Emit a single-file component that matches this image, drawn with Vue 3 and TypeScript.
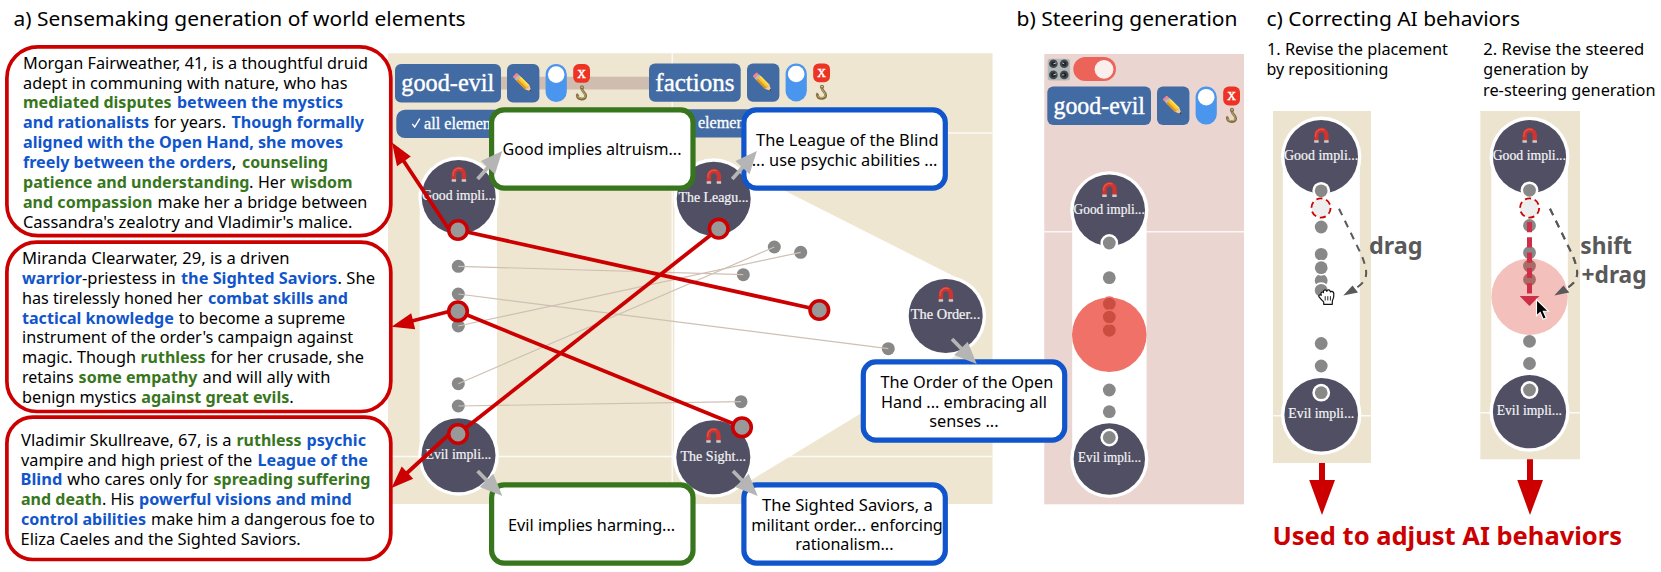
<script setup lang="ts">
type Seg = [text: string, start: number, end: number, tone?: 'green' | 'blue']
interface Card { y: number; h: number; r: number; base: number; lines: Seg[][] }
interface Label { t: string; x: number; e: number; y: number; c: string }
interface Toolbar { x: number; y: number; w: number; name: string; tx: number; te: number; px: number }

const LINE = 19.87

const cards: Card[] = [
  {
    y: 46.9, h: 188.8, r: 31, base: 68.7,
    lines: [
      [['Morgan Fairweather, 41, is a thoughtful druid', 23, 368]],
      [['adept in communing with nature, who has', 23, 347.5]],
      [['mediated disputes', 23, 171.5, 'green'], ['between the mystics', 177, 343, 'blue']],
      [['and rationalists', 23, 149, 'blue'], ['for years.', 154, 226], ['Though formally', 231.5, 364, 'blue']],
      [['aligned with the Open Hand, she moves', 23, 343, 'blue']],
      [['freely between the orders', 23, 231.5, 'blue'], [',', 231.5, 236.5], ['counseling', 242, 328, 'green']],
      [['patience and understanding', 23, 249.5, 'green'], ['.', 249, 253.5], ['Her', 258, 285.5], ['wisdom', 290.5, 352.5, 'green']],
      [['and compassion', 23, 152.5, 'green'], ['make her a bridge between', 157.5, 367.3]],
      [["Cassandra's zealotry and Vladimir's malice.", 23, 352.5]],
    ],
  },
  {
    y: 242.1, h: 169.4, r: 30, base: 264,
    lines: [
      [['Miranda Clearwater, 29, is a driven', 22, 289.5]],
      [['warrior', 22, 82, 'blue'], ['-priestess in', 82, 175.8], ['the Sighted Saviors', 181, 337.3, 'blue'], ['. She', 337.5, 375]],
      [['has tirelessly honed her', 22, 202.8], ['combat skills and', 208, 348, 'blue']],
      [['tactical knowledge', 22, 173.8, 'blue'], ['to become a supreme', 178.8, 345.3]],
      [["instrument of the order's campaign against", 22, 353]],
      [['magic. Though', 22, 136], ['ruthless', 140.5, 205.5, 'green'], ['for her crusade, she', 210.5, 364]],
      [['retains', 22, 73.6], ['some empathy', 78.6, 197.5, 'green'], ['and will ally with', 202.6, 330.5]],
      [['benign mystics', 22, 136.5], ['against great evils', 141.3, 289.3, 'green'], ['.', 289.3, 293.8]],
    ],
  },
  {
    y: 417.2, h: 142.3, r: 26, base: 445.7,
    lines: [
      [['Vladimir Skullreave, 67, is a', 21, 231.5], ['ruthless', 236.5, 301.5, 'green'], ['psychic', 306.5, 366, 'blue']],
      [['vampire and high priest of the', 21, 252.3], ['League of the', 257.5, 368, 'blue']],
      [['Blind', 20.5, 62.3, 'blue'], ['who cares only for', 67.3, 208.3], ['spreading suffering', 213.5, 370.3, 'green']],
      [['and death', 21, 102, 'green'], ['. His', 102, 134.3], ['powerful visions and mind', 139, 351.7, 'blue']],
      [['control abilities', 21, 146, 'blue'], ['make him a dangerous foe to', 151, 374.8]],
      [['Eliza Caeles and the Sighted Saviors.', 20.5, 300.8]],
    ],
  },
]

const titles: Label[] = [
  { t: 'a) Sensemaking generation of world elements', x: 13.5, e: 465.5, y: 25.5, c: 'title' },
  { t: 'b) Steering generation', x: 1016.5, e: 1237.5, y: 25.5, c: 'title' },
  { t: 'c) Correcting AI behaviors', x: 1266.5, e: 1520, y: 25.5, c: 'title' },
  { t: '1. Revise the placement', x: 1267, e: 1448, y: 55, c: 'body' },
  { t: 'by repositioning', x: 1266.5, e: 1388.3, y: 75.4, c: 'body' },
  { t: '2. Revise the steered', x: 1483.3, e: 1644.3, y: 55, c: 'body' },
  { t: 'generation by', x: 1483.3, e: 1588.3, y: 75.4, c: 'body' },
  { t: 're-steering generation', x: 1483, e: 1655.5, y: 95.8, c: 'body' },
  { t: 'drag', x: 1369, e: 1422.6, y: 254, c: 'action' },
  { t: 'shift', x: 1580.3, e: 1632, y: 254, c: 'action' },
  { t: '+drag', x: 1581.5, e: 1646.6, y: 283, c: 'action' },
  { t: 'Used to adjust AI behaviors', x: 1272.5, e: 1622, y: 545, c: 'verdict' },
]

const boxes = [
  { x: 491.6, y: 109.9, tone: 'green' },
  { x: 743.9, y: 109.9, tone: 'blue' },
  { x: 863.3, y: 361.9, tone: 'blue' },
  { x: 491.6, y: 484.9, tone: 'green' },
  { x: 743.9, y: 484.9, tone: 'blue' },
]
const boxText: Label[] = [
  { t: 'Good implies altruism...', x: 502.5, e: 681.5, y: 155.3, c: 'body' },
  { t: 'The League of the Blind', x: 756, e: 938.5, y: 145.6, c: 'body' },
  { t: '... use psychic abilities ...', x: 751.7, e: 937.5, y: 165.5, c: 'body' },
  { t: 'The Order of the Open', x: 880.5, e: 1053.3, y: 387.7, c: 'body' },
  { t: 'Hand ... embracing all', x: 881, e: 1047, y: 407.5, c: 'body' },
  { t: 'senses ...', x: 929.3, e: 998.5, y: 427.4, c: 'body' },
  { t: 'Evil implies harming...', x: 508, e: 675.2, y: 531, c: 'body' },
  { t: 'The Sighted Saviors, a', x: 762, e: 932.8, y: 510.7, c: 'body' },
  { t: 'militant order... enforcing', x: 751.3, e: 942.8, y: 530.5, c: 'body' },
  { t: 'rationalism...', x: 795.3, e: 893.5, y: 550.3, c: 'body' },
]

const toolbars: Toolbar[] = [
  { x: 395, y: 64, w: 106, name: 'good-evil', tx: 401.3, te: 494.3, px: 507 },
  { x: 649, y: 63.4, w: 91.7, name: 'factions', tx: 655.3, te: 734.6, px: 747 },
  { x: 1047.3, y: 86.6, w: 103.7, name: 'good-evil', tx: 1053.5, te: 1145, px: 1157 },
]

interface Pole { x: number; y: number; r: number; t: string; lx: number; le: number; ly: number; my?: number }
const poles: Pole[] = [
  { x: 458.7, y: 197, r: 37, t: 'Good impli...', lx: 422, le: 495.3, ly: 200, my: 175 },
  { x: 458.5, y: 455.3, r: 37, t: 'Evil impli...', lx: 425.5, le: 491.3, ly: 458.7 },
  { x: 713.7, y: 198.7, r: 37, t: 'The Leagu...', lx: 678.5, le: 748.6, ly: 202.3, my: 177 },
  { x: 713.3, y: 457.3, r: 37, t: 'The Sight...', lx: 680.5, le: 746, ly: 460.7, my: 436 },
  { x: 945.7, y: 316, r: 37, t: 'The Order...', lx: 910.8, le: 980.3, ly: 319.3, my: 295 },
  { x: 1109.3, y: 210.3, r: 35.7, t: 'Good impli...', lx: 1073.6, le: 1144.8, ly: 213.7, my: 190.3 },
  { x: 1109.3, y: 459, r: 35.7, t: 'Evil impli...', lx: 1078, le: 1141, ly: 462.3 },
  { x: 1321.2, y: 156.8, r: 36.8, t: 'Good impli...', lx: 1284, le: 1358.3, ly: 160.3, my: 136 },
  { x: 1321.2, y: 414.7, r: 36.8, t: 'Evil impli...', lx: 1288.3, le: 1354.3, ly: 418 },
  { x: 1529.5, y: 156.7, r: 36.6, t: 'Good impli...', lx: 1492.7, le: 1566, ly: 160.2, my: 136 },
  { x: 1529.5, y: 411.7, r: 36.6, t: 'Evil impli...', lx: 1496.7, le: 1562, ly: 415 },
]

const links = [
  [266.3, 743.3, 274.7], [294, 888.3, 348.7], [326, 800.7, 252.3], [383.7, 774.3, 247], [406, 741, 401.7],
]
const tracked = [
  [458, 230, 819.3, 310], [458, 311.3, 742, 427.3], [458, 434, 718.7, 228.7],
]
const plainDots = [
  [1109.3, 277.7], [1109.3, 390], [1109.3, 411.7],
  [1321.2, 227], [1321.2, 254.3], [1321.2, 280.5], [1321.2, 267.7], [1321.2, 290.3], [1321.2, 343.5], [1321.2, 366],
  [1529.5, 225.5], [1529.5, 252.6], [1529.5, 341.3], [1529.5, 363.5],
]
const ringDots = [
  [1109.3, 243], [1109.3, 437.5], [1321.2, 190.8], [1321.2, 392.7], [1529.5, 190.3], [1529.5, 390],
]
const pointers = [
  { x: 502.3, y: 151, up: true }, { x: 756.9, y: 151, up: true },
  { x: 502.3, y: 496, up: false }, { x: 757.7, y: 496, up: false }, { x: 976.7, y: 364, up: false },
]
</script>

<template>
  <main class="figure">
    <svg class="canvas" viewBox="0 0 1661 572" width="1661" height="572" role="img" aria-label="Sensemaking, steering and correcting generation">
      <defs>
        <g id="pencil">
          <g transform="rotate(45)">
            <rect x="-11.4" y="-3" width="3.4" height="6" rx="1.3" fill="#ee8791" />
            <rect x="-8.3" y="-3" width="2.4" height="6" fill="#b9c0c5" />
            <rect x="-6" y="-3" width="12.5" height="6" fill="#fbc62c" />
            <rect x="-6" y="0.9" width="12.5" height="2.1" fill="#e19522" />
            <rect x="-6" y="-3" width="12.5" height="1.7" fill="#ffdc59" />
            <path d="M6.5-3L12.4 0L6.5 3Z" fill="#efc99a" />
            <path d="M10.3-1.1L12.7 0L10.3 1.1Z" fill="#333" />
          </g>
        </g>
        <g id="hook" fill="none" stroke-linecap="round">
          <circle cx="0.5" cy="-5.6" r="1.5" stroke="#8b774a" stroke-width="1.3" />
          <path d="M.5-3.8C.5-1.7 4.2-.3 4.2 3C4.2 7-3.5 7.5-4.3 2.3" stroke="#7f6a3c" stroke-width="2.7" />
          <path d="M.4-3.4C.8-1.7 3.7-.3 3.7 2.9C3.7 5.6-2.7 6.4-4 2.6" stroke="#b7a36b" stroke-width="1.1" />
          <path d="M-5.6 3.5L-4.6-.2L-2.2 2.8Z" fill="#8b774a" />
        </g>
        <g id="magnet">
          <path d="M-5 6.4V0A5 5 0 0 1 5 0V6.4" transform="translate(0 -1)" fill="none" stroke="#cf3430" stroke-width="4.4" />
          <path d="M-5.8 1V-1A5.8 5.8 0 0 1 3-6" fill="none" stroke="#e4574d" stroke-width="1.1" />
          <path d="M-7.2 4.2H-2.8V6.8H-7.2ZM2.8 4.2H7.2V6.8H2.8Z" fill="#c7cbcc" />
        </g>
        <g id="drag-path">
          <path d="M1339 208.7L1361.5 255C1366.5 268 1367.5 274 1364.5 280C1362.5 284 1358 287 1354 289.5" fill="none" stroke="#595959" stroke-width="2" stroke-dasharray="7.2 6.2" />
          <path d="M1343.3 295.5L1352.5 285.4L1358 292.6Z" fill="#595959" />
        </g>
      </defs>

      <!-- panel grounds -->
      <rect x="388" y="53.3" width="604.5" height="450.7" fill="#eee6d1" />
      <path d="M672.2 53.3V504M672.2 133H992.5M388 456.5H992.5" class="grid" />
      <rect x="1044.3" y="54" width="199.7" height="450.3" fill="#ebd5d0" />
      <path d="M1044.3 231.8H1244" class="grid" />
      <rect x="1273" y="111" width="98" height="352" fill="#ece4cf" />
      <path d="M1273 415.7H1371" class="grid" />
      <rect x="1480.3" y="111" width="99.7" height="348.3" fill="#ece4cf" />
      <path d="M1480.3 412.7H1580" class="grid" />

      <!-- tracks -->
      <g fill="#fff">
        <rect x="419.7" y="197" width="77.3" height="258.3" />
        <path d="M713.7 198.7L945.7 316L713.3 457.3Z" stroke="#fff" stroke-width="78.4" stroke-linejoin="round" />
        <rect x="1072.2" y="210" width="74.4" height="249" />
        <rect x="1282.8" y="157" width="77" height="258" />
        <rect x="1491.3" y="157" width="76.5" height="255" />
        <circle v-for="(p, i) in poles" :key="i" :cx="p.x" :cy="p.y" :r="p.r + 3.4" />
      </g>

      <!-- toolbars -->
      <rect x="500" y="76.7" width="150" height="12.8" fill="#cfbeb0" />
      <path d="M405 109.7H520V138H405A8.7 8.7 0 0 1 396.3 129.3V118.4A8.7 8.7 0 0 1 405 109.7ZM660 109.3H780V137.4H660Z" fill="#426aa3" />
      <path d="M412.3 123.8L414.7 127L419.8 118.6" fill="none" stroke="#fff" stroke-width="1.4" />
      <text x="424" y="128.5" class="serif chip">all elements</text>
      <text x="677.7" y="127.9" class="serif chip">all elements</text>
      <g v-for="(b, i) in toolbars" :key="i">
        <rect :x="b.x" :y="b.y" :width="b.w" height="38.4" rx="6" fill="#426aa3" />
        <text :x="b.tx" :y="b.y + 27.2" :textLength="b.te - b.tx" lengthAdjust="spacingAndGlyphs" class="serif name">{{ b.name }}</text>
        <rect :x="b.px" :y="b.y" width="32.4" height="38.4" rx="6" fill="#426aa3" />
        <use href="#pencil" :transform="`translate(${b.px + 15.7} ${b.y + 18.8})`" />
        <rect :x="b.px + 38.6" :y="b.y" width="21.2" height="38" rx="10.6" fill="#4a95ee" />
        <circle :cx="b.px + 49.2" :cy="b.y + 10.6" r="8.3" fill="#fff" />
        <rect :x="b.px + 66.2" :y="b.y" width="16.8" height="18.8" rx="5.6" fill="#ed3324" />
        <text :x="b.px + 74.6" :y="b.y + 13.6" class="serif close" text-anchor="middle">X</text>
        <use href="#hook" :transform="`translate(${b.px + 74.5} ${b.y + 29})`" />
      </g>

      <g>
        <rect x="1047.7" y="58.8" width="22.2" height="21.6" rx="2.5" fill="#b3b8ba" />
        <g v-for="(k, i) in [[1053.4, 63.8], [1064.2, 63.8], [1053.4, 74.9], [1064.2, 74.9]]" :key="i">
          <circle :cx="k[0]" :cy="k[1]" r="4.3" fill="#44494c" />
          <circle :cx="k[0]" :cy="k[1]" r="2.3" fill="#202426" />
          <path :d="`M${k[0]} ${k[1]}l${i % 2 ? -2 : 3} ${i === 3 ? 0 : -1}`" stroke="#c9cdce" stroke-width="1" />
        </g>
        <rect x="1073.3" y="57" width="42.7" height="24" rx="12" fill="#ec6459" />
        <circle cx="1104" cy="69.3" r="9.4" fill="#fbefee" />
      </g>

      <!-- poles -->
      <g v-for="(p, i) in poles" :key="i">
        <circle :cx="p.x" :cy="p.y" :r="p.r" fill="#504f63" />
        <use v-if="p.my" href="#magnet" :transform="`translate(${p.x + 0.2} ${p.my})`" />
        <text :x="p.lx" :y="p.ly" :textLength="p.le - p.lx" lengthAdjust="spacingAndGlyphs" class="serif pole">{{ p.t }}</text>
      </g>

      <!-- linked elements -->
      <g v-for="(l, i) in links" :key="i">
        <circle cx="458.3" :cy="l[0]" r="6.5" fill="#888" />
        <circle :cx="l[1]" :cy="l[2]" r="6.5" fill="#888" />
        <path :d="`M458.3 ${l[0]}L${l[1]} ${l[2]}`" stroke="#cfc0b3" stroke-width="1.2" />
      </g>
      <g v-for="(d, i) in plainDots" :key="i">
        <circle :cx="d[0]" :cy="d[1]" r="8" fill="#fff" />
        <circle :cx="d[0]" :cy="d[1]" r="6.4" fill="#888" />
      </g>
      <g v-for="(d, i) in ringDots" :key="i">
        <circle :cx="d[0]" :cy="d[1]" r="8.9" fill="#fff" />
        <circle :cx="d[0]" :cy="d[1]" r="6.4" fill="#888" />
      </g>

      <!-- boxes -->
      <rect v-for="(b, i) in boxes" :key="i" :x="b.x" :y="b.y" width="201.4" height="78.2" rx="12.5" fill="#fff" stroke-width="5.2" :class="['edge', b.tone]" />
      <text v-for="(l, i) in boxText" :key="i" :x="l.x" :y="l.y" :textLength="l.e - l.x" lengthAdjust="spacingAndGlyphs" :class="l.c">{{ l.t }}</text>
      <g v-for="(a, i) in pointers" :key="i" :transform="`translate(${a.x} ${a.y})`" fill="#b5b5b5">
        <template v-if="a.up">
          <path d="M-24.7 28L-13 15" stroke="#b5b5b5" stroke-width="3.8" />
          <path d="M0 0L-21.4 10L-7.4 23.3Z" />
        </template>
        <template v-else>
          <path d="M-24.7-25L-14-14" stroke="#b5b5b5" stroke-width="3.8" />
          <path d="M0 0L-22.5-9L-9-22.2Z" />
        </template>
      </g>

      <!-- story cards -->
      <g v-for="(c, i) in cards" :key="i">
        <rect x="6.9" :y="c.y" width="383.9" :height="c.h" :rx="c.r" fill="#fff" stroke="#c00" stroke-width="3.7" />
        <template v-for="(line, j) in c.lines" :key="j">
          <text v-for="(s, k) in line" :key="k" :x="s[1]" :y="c.base + j * LINE" :textLength="s[2] - s[1]" lengthAdjust="spacingAndGlyphs" :class="['body', s[3]]">{{ s[0] }}</text>
        </template>
      </g>

      <!-- tracked elements -->
      <g stroke="#c00" stroke-width="3.8" fill="none">
        <path v-for="(t, i) in tracked" :key="i" :d="`M${t[0]} ${t[1]}L${t[2]} ${t[3]}`" />
        <path d="M449 229.5L403 160M449 311.5L412 321M449 434.5L407 473" />
      </g>
      <path d="M392 142.4L410.8 156.6L397 166.3ZM391.5 326.7L411.2 313.2L415.2 329.2ZM391.5 488L401.7 466.4L413.2 478.8Z" fill="#c00" />
      <template v-for="(t, i) in tracked" :key="i">
        <circle :cx="t[0]" :cy="t[1]" r="9.3" class="mark" />
        <circle :cx="t[2]" :cy="t[3]" r="9.3" class="mark" />
      </template>

      <!-- steering target -->
      <circle cx="1109.3" cy="334.7" r="37.3" fill="#f07167" />
      <circle v-for="y in [304, 330.3, 317]" :key="y" cx="1109.3" :cy="y" r="7" fill="#cb4c41" stroke="#f07167" stroke-width="1.3" />

      <!-- repositioning -->
      <circle cx="1321" cy="208" r="9.6" class="ghost" />
      <circle cx="1529.6" cy="208" r="9.6" class="ghost" />
      <use href="#drag-path" />
      <use href="#drag-path" transform="translate(211 0)" />
      <circle cx="1529.6" cy="296.7" r="38.2" fill="#f4c0bc" />
      <circle v-for="y in [266, 279.5]" :key="y" cx="1529.5" :cy="y" r="6.4" fill="#a96b66" />
      <path d="M1523.2 254A6.4 6.4 0 0 0 1535.8 254V258H1523.2Z" fill="none" />
      <path d="M1529.5 222V294" stroke="#cc2f47" stroke-width="5" stroke-dasharray="10.2 5.1" />
      <path d="M1519.6 296H1539.4L1529.5 306Z" fill="#cc2f47" />
      <use href="#drag-path" transform="translate(211 0)" />

      <g transform="translate(1318 288.5)" stroke-linejoin="round">
        <path d="M3.2 6.5C2.3 4.2 4 2.6 5.4 4C5 1.3 8 .5 8.8 2.8C9.5.7 12.2 1 12.4 3.5C13.8 2.2 15.8 3.2 15.8 5.4C16.3 8.6 15.4 10.6 14.3 12.8V15.8H5.7V13.4C4.2 12.1 2.3 10.1.9 8.2C.3 6.7 2 5.6 3.2 6.8Z" fill="#fff" stroke="#111" stroke-width="1.2" />
        <path d="M7.2 7.7V12M9.8 7.7V12M12.4 7.7V12" stroke="#111" stroke-width=".9" />
      </g>
      <path d="M1536.5 299.5V315.8L1540.2 312.4L1543.2 319.3L1546.3 318L1543.3 311.3H1548.6Z" fill="#000" stroke="#fff" stroke-width="1.1" />

      <!-- outcome -->
      <path d="M1319 463H1325V480H1335L1322 515L1309.2 480H1319ZM1527 459.3H1533V480H1543L1530 515L1517.3 480H1527Z" fill="#c00" />

      <text v-for="(l, i) in titles" :key="i" :x="l.x" :y="l.y" :textLength="l.e - l.x" lengthAdjust="spacingAndGlyphs" :class="l.c">{{ l.t }}</text>
    </svg>
  </main>
</template>

<style>
body {
  margin: 0;
  background: #fff;
}
</style>

<style scoped>
.figure {
  width: 1661px;
  height: 572px;
  overflow: hidden;
}
.canvas {
  display: block;
  font-family: "Noto Sans", "Open Sans", sans-serif;
}
.title {
  font-size: 20.3px;
}
.body {
  font-size: 15.8px;
}
.body.green,
.body.blue {
  font-weight: 700;
}
.body.green {
  fill: #38761d;
}
.body.blue {
  fill: #1155cc;
}
.action {
  font-size: 22.5px;
  font-weight: 700;
  fill: #595959;
}
.verdict {
  font-size: 25.2px;
  font-weight: 700;
  fill: #c00;
}
.edge.green {
  stroke: #38761d;
}
.edge.blue {
  stroke: #1155cc;
}
.serif {
  font-family: "Liberation Serif", serif;
  fill: #fff;
  stroke: #fff;
  stroke-width: 0.3px;
}
.name {
  font-size: 24.6px;
  stroke-width: 0.4px;
}
.chip {
  font-size: 16.2px;
}
.pole {
  font-size: 13.6px;
  fill: #f4f4f6;
  stroke: #f4f4f6;
  stroke-width: 0.2px;
}
.close {
  font-size: 12px;
  stroke-width: 0.5px;
}
.grid {
  stroke: #fff;
  stroke-opacity: 0.8;
  stroke-width: 1.4px;
  fill: none;
}
.mark {
  fill: #999;
  stroke: #c00;
  stroke-width: 3.6px;
}
.ghost {
  fill: #eee;
  stroke: #c00;
  stroke-width: 1.8px;
  stroke-dasharray: 6.2 3.85;
}
</style>
